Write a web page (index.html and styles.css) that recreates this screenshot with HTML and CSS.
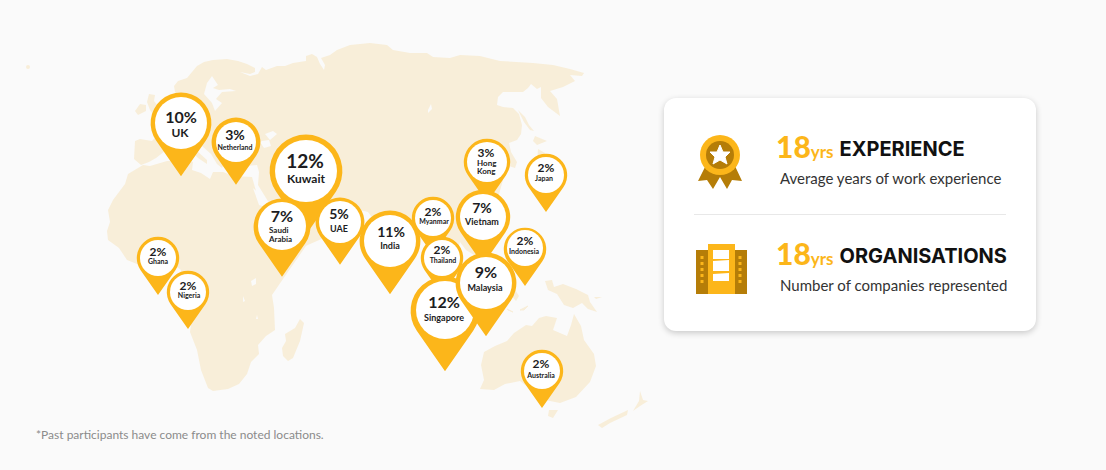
FILE: index.html
```html
<!DOCTYPE html>
<html lang="en">
<head>
<meta charset="utf-8">
<meta name="viewport" content="width=device-width, initial-scale=1">
<title>Class profile</title>
<link rel="stylesheet" href="styles.css">
</head>
<body>
<main class="profile">
  <section class="origins">
    <svg class="map" viewBox="0 30 650 400" role="img" aria-label="Participants by country">
      <defs>
        <path id="drop" d="M0 70L-32.8 22.9A40 40 0 1 1 32.8 22.9Z"/>
      </defs>

      <g class="land">
        <!-- Europe and Asia -->
        <path d="M135 141L140 139 152 141 158 134 156 128 165 120 178 110 182 100 175 92 174 86 178 81 187 78 192 72 197 66 204 62 213 60 227 59 238 61 247 64 255 68 255 72 250 74 240 72 250 76 258 74 262 67 266 70 277 66 285 66 293 63 306 61 306 56 312 54 317 57 320 64 324 70 325 65 321 58 330 55 337 50 350 45 370 43 387 45 393 50 410 53 427 53 433 57 450 58 460 55 480 56 500 61 533 63 553 65 570 69 584 73 582 76 570 75 575 81 563 87 550 91 557 99 560 116 548 107 541 98 541 87 537 89 531 84 528 88 523 92 503 92 498 97 497 105 503 107 513 108 519 114 522 125 521 134 517 140 509 143 511 152 517 162 515 168 509 166 507 158 503 168 503 180 498 198 492 211 482 217 474 223 481 235 481 247 474 255 466 250 460 242 456 256 461 275 455 270 450 250 443 232 436 220 428 210 419 212 408 224 401 240 394 260 386 251 378 226 368 212 348 207 329 202 340 213 342 222 326 237 301 248 289 242 278 218 266 198 258 185 259 172 257 165 247 166 238 163 233 160 226 160 222 168 217 164 211 154 202 146 196 150 207 160 207 164 198 158 188 148 178 145 165 151 156 158 149 162 141 165 134 159Z"/>
        <!-- Africa -->
        <path d="M143 165L150 166 167 161 188 160 193 162 192 170 201 173 210 179 213 172 223 172 234 176 252 177 256 191 270 214 282 231 297 235 312 228 310 240 299 256 283 279 272 295 274 308 275 330 266 336 258 345 259 354 251 362 247 374 239 384 228 389 213 391 208 388 201 370 197 350 190 332 192 318 188 301 180 290 180 277 181 270 170 262 150 267 137 264 127 260 119 248 108 240 107 231 110 222 108 210 113 200 125 184 128 174Z"/>
        <!-- Madagascar -->
        <path d="M300 319L304 323 300 341 293 358 288 361 283 356 282 348 286 341 285 334 295 328Z"/>
        <!-- British Isles -->
        <path d="M149 94L155 95 154 101 158 106 163 118 166 124 152 126 155 117 150 110 147 102Z"/>
        <path d="M140 104L146 105 146 111 138 115 135 111Z"/>
        <path d="M213 151L219 154 223 162 217 159Z"/>
        <circle cx="28" cy="67" r="2"/>
        <!-- Sakhalin and Japan -->
        <path d="M518 110L525 117 529 125 534 131 530 130 524 122Z"/>
        <path d="M535 136L547 141 537 145 533 141Z"/>
        <path d="M538 149L545 153 541 164 534 174 524 179 530 172 537 164Z"/>
        <!-- Indonesia and New Guinea -->
        <path d="M512 285L519 296 516 301 509 293Z"/>
        <path d="M507 309L513 312 508 310ZM520 310L528 306 524 310Z" stroke="#f8eed9"/>
        <path d="M545 281L552 280 554 287 563 284 576 289 588 295 590 302 597 312 588 309 582 303 573 308 564 305 557 294 548 290Z"/>
        <path d="M594 297L602 297 596 299Z"/>
        <!-- Australia -->
        <path d="M480 389L484 380 481 365 484 352 495 346 507 341 514 333 526 325 532 326 539 318 546 316 557 318 553 330 567 336 571 325 574 314 581 326 584 340 594 354 596 366 590 382 576 397 560 403 545 400 533 391 520 381 505 384 494 390Z"/>
        <path d="M549 410L558 410 553 418 548 416Z"/>
        <!-- New Zealand -->
        <path d="M640 391L643 400 648 401 640 406 633 411 639 401ZM628 410L627 415 610 423 602 428 598 425 611 418Z"/>
      </g>

      <!-- Seas and lakes -->
      <g class="water">
        <path d="M218 85L212 76 207 83 204 94 212 103 215 111 222 103 216 99 222 92 236 91 230 89 219 90 213 88Z"/>
        <path d="M260 142L264 148 271 146 269 140 262 141ZM253 188L261 195 268 208 259 205Z"/>
        <path d="M265 134L273 131 277 134 270 140Z"/>
        <path d="M431 104L432 109 428 113 428 110Z"/>
        <path d="M251 281L256 278 256 284 252 286ZM243 296L245 301 243 302ZM257 315L258 319 256 319Z"/>
      </g>

      <g class="pins">
        <g>
          <use href="#drop" transform="translate(181 123) scale(.76)"/><circle cx="181" cy="123" r="26"/>
          <text class="pct m" x="181" y="123">10%</text><text class="name l" x="180" y="137">UK</text>
        </g>
        <g>
          <use href="#drop" transform="translate(236 142) scale(.61)"/><circle cx="236" cy="142" r="20"/>
          <text class="pct s" x="235" y="140">3%</text><text class="name xs" x="235" y="150">Netherland</text>
        </g>
        <g>
          <use href="#drop" transform="translate(306 171) scale(.91)"/><circle cx="306" cy="171" r="31"/>
          <text class="pct l" x="305" y="168">12%</text><text class="name l" x="306" y="183">Kuwait</text>
        </g>
        <g>
          <use href="#drop" transform="translate(282 227) scale(.71)"/><circle cx="282" cy="226" r="24"/>
          <text class="pct m" x="282" y="222">7%</text>
          <text class="name s start" x="269" y="233">Saudi<tspan x="269" dy="9">Arabia</tspan></text>
        </g>
        <g>
          <use href="#drop" transform="translate(340 222) scale(.61)"/><circle cx="340" cy="222" r="21"/>
          <text class="pct s" x="339" y="219">5%</text><text class="name m" x="339" y="232">UAE</text>
        </g>
        <g>
          <use href="#drop" transform="translate(158 258) scale(.53)"/><circle cx="158" cy="258" r="18"/>
          <text class="pct xs" x="158" y="256">2%</text><text class="name xs" x="158" y="264">Ghana</text>
        </g>
        <g>
          <use href="#drop" transform="translate(188 292) scale(.53)"/><circle cx="188" cy="292" r="18"/>
          <text class="pct xs" x="188" y="290">2%</text><text class="name xs" x="189" y="298">Nigeria</text>
        </g>
        <g>
          <use href="#drop" transform="translate(433 218) scale(.53)"/><circle cx="433" cy="218" r="18"/>
          <text class="pct xs" x="433" y="216">2%</text><text class="name xs" x="434" y="224">Myanmar</text>
        </g>
        <g>
          <use href="#drop" transform="translate(390 241) scale(.76)"/><circle cx="390" cy="241" r="26"/>
          <text class="pct s" x="391" y="237">11%</text><text class="name m" x="390" y="249">India</text>
        </g>
        <g>
          <use href="#drop" transform="translate(442 258) scale(.53)"/><circle cx="442" cy="258" r="18"/>
          <text class="pct xs" x="442" y="254">2%</text><text class="name xs" x="443" y="263">Thailand</text>
        </g>
        <g>
          <use href="#drop" transform="translate(487 162) scale(.58)"/><circle cx="487" cy="162" r="20"/>
          <text class="pct xs" x="486" y="157">3%</text>
          <text class="name s start" x="477" y="166">Hong<tspan x="477" dy="8">Kong</tspan></text>
        </g>
        <g>
          <use href="#drop" transform="translate(483 217) scale(.68)"/><circle cx="483" cy="217" r="23"/>
          <text class="pct s" x="482" y="213">7%</text><text class="name m" x="482" y="225">Vietnam</text>
        </g>
        <g>
          <use href="#drop" transform="translate(546 175) scale(.53)"/><circle cx="546" cy="175" r="18"/>
          <text class="pct xs" x="546" y="172">2%</text><text class="name xs" x="544" y="181">Japan</text>
        </g>
        <g>
          <use href="#drop" transform="translate(525 249) scale(.53)"/><circle cx="525" cy="248" r="18"/>
          <text class="pct xs" x="525" y="245">2%</text><text class="name xs" x="524" y="254">Indonesia</text>
        </g>
        <g>
          <use href="#drop" transform="translate(445 311) scale(.86)"/><circle cx="445" cy="310" r="29"/>
          <text class="pct m" x="444" y="308">12%</text><text class="name m" x="444" y="321">Singapore</text>
        </g>
        <g>
          <use href="#drop" transform="translate(486 283) scale(.76)"/><circle cx="486" cy="283" r="26"/>
          <text class="pct m" x="486" y="278">9%</text><text class="name m" x="485" y="291">Malaysia</text>
        </g>
        <g>
          <use href="#drop" transform="translate(542 371) scale(.53)"/><circle cx="542" cy="371" r="18"/>
          <text class="pct xs" x="541" y="368">2%</text><text class="name xs" x="541" y="378">Australia</text>
        </g>
      </g>
    </svg>
    <p class="note">*Past participants have come from the noted locations.</p>
  </section>

  <section class="card">
    <article class="stat">
      <svg class="icon" viewBox="0 0 54 54" aria-hidden="true">
        <path fill="#b57d08" d="M11 32L4 46 13 45 19 54 26 42 33 54 38 45 48 46 41 31Z"/>
        <circle cx="26" cy="20" r="20" fill="#fcb61a"/>
        <circle cx="26" cy="20" r="14" fill="#b57d08"/>
        <path fill="#fff" stroke="#fff" stroke-linejoin="round" d="M26 10L29 17 36 17 31 22 33 29 26 25 19 29 21 22 16 17 23 17Z"/>
      </svg>
      <div class="body">
        <h2 class="headline"><span class="value">18<small>yrs</small></span> EXPERIENCE</h2>
        <p class="caption">Average years of work experience</p>
      </div>
    </article>
    <article class="stat">
      <svg class="icon" viewBox="0 0 54 54" aria-hidden="true">
        <path fill="#b57d08" d="M2 8H53V52H2Z"/>
        <path fill="#fcb61a" d="M14 2H41V52H14Z"/>
        <path fill="#fff" d="M19 8H35V17H19ZM19 19L35 18V29H19ZM19 32L35 31V39H19Z"/>
        <path stroke="#fcb61a" stroke-width="3" stroke-dasharray="3 3" d="M8 14V42M46 14V42"/>
      </svg>
      <div class="body">
        <h2 class="headline"><span class="value">18<small>yrs</small></span> ORGANISATIONS</h2>
        <p class="caption">Number of companies represented</p>
      </div>
    </article>
  </section>
</main>
</body>
</html>
```
FILE: styles.css
```css
* {
  box-sizing: border-box;
}

body {
  margin: 0;
  background: #fafafa;
  color: #111;
  font-family: Lato, sans-serif;
}

h2,
p {
  margin: 0;
}

.profile {
  display: grid;
  grid-template-columns: minmax(0, 650fr) minmax(0, 372fr);
  column-gap: 14px;
  align-items: start;
  padding: 30px 70px 24px 0;
}

.map {
  display: block;
  width: 100%;
}

.land {
  fill: #f8eed9;
  stroke-linejoin: round;
}

.water {
  fill: #fafafa;
}

.pins use {
  fill: #fcb61a;
}

.pins circle {
  fill: #fff;
}

.pins text {
  fill: #1c1c22;
  font-weight: 700;
  text-anchor: middle;
}

.pins .start {
  text-anchor: start;
}

.pct.l { font-size: 19px; }
.pct.m { font-size: 16px; }
.pct.s { font-size: 14px; }
.pct.xs { font-size: 12px; }

.name.l { font-size: 12px; }
.name.m { font-size: 9px; }
.name.s { font-size: 8px; }
.name.xs { font-size: 7px; }

.note {
  margin: -5px 0 0 36px;
  color: #8b8b8b;
  font-size: 12px;
  line-height: 20px;
}

.card {
  margin-top: 68px;
  padding: 10px 30px;
  border-radius: 12px;
  background: #fff;
  box-shadow: 0 2px 6px rgba(0, 0, 0, 0.2);
}

.stat {
  display: flex;
  align-items: center;
  gap: 28px;
  padding: 25px 0 23px;
}

.stat + .stat {
  border-top: 1px solid #e8e8e8;
}

.icon {
  flex: none;
  width: 54px;
  height: 54px;
}

.body {
  min-width: 0;
}

.headline {
  display: flex;
  align-items: center;
  gap: 6px;
  height: 32px;
  font-family: Inter, sans-serif;
  font-size: 20px;
  line-height: 32px;
  white-space: nowrap;
}

.value {
  display: flex;
  align-items: baseline;
  color: #fcb61a;
  font-family: Lato, sans-serif;
  font-size: 30px;
  font-weight: 900;
  line-height: 32px;
}

.value small {
  font-size: 17px;
  font-weight: 700;
}

.caption {
  margin-left: 4px;
  color: #333;
  font-size: 15px;
  line-height: 26px;
  white-space: nowrap;
}
```
